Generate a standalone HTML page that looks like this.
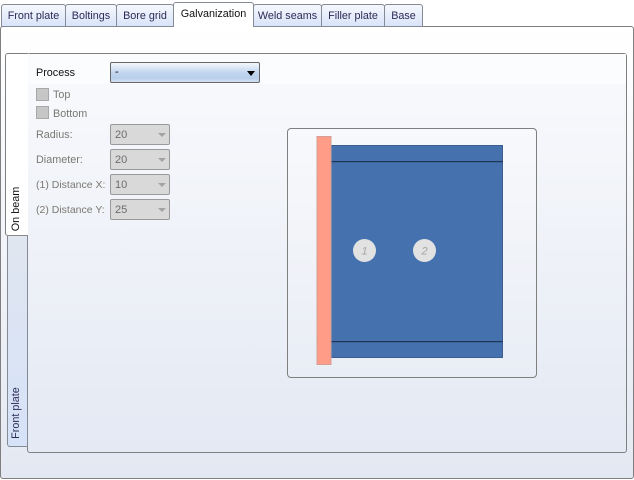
<!DOCTYPE html>
<html><head><meta charset="utf-8">
<style>
html,body{margin:0;padding:0;background:#fff}
body{width:634px;height:480px;position:relative;overflow:hidden;font-family:"Liberation Sans",sans-serif;font-size:10.8px}
div{position:absolute;box-sizing:border-box;white-space:nowrap}
.tab{top:4px;height:23px;border:1px solid #848b96;border-bottom:1px solid #848b96;border-radius:3px 3px 0 0;background:linear-gradient(#f5f8fd,#d9e4f9);color:#2b2b55;text-align:center;line-height:22px}
.lbl{color:#7a7872;left:36px}
.cmb{left:110px;width:60px;height:21px;border:1px solid #9a9a9a;border-radius:2px;background:#d9d9d9;color:#6d6d6d;padding-left:4px;line-height:20px;font-size:11px}
.cmb:after{content:"";position:absolute;right:3px;top:8px;border-left:4.5px solid transparent;border-right:4.5px solid transparent;border-top:4.5px solid #a3a3a3}
.chk{left:36px;width:13px;height:13px;border:1px solid #a8a8a8;background:#c6c6c6}
</style></head><body>
<div style="left:0;top:26px;width:634px;height:453px;border:1px solid #7f7f7f;border-radius:3px;background:linear-gradient(#fff,#e3e8f2)"></div>
<div class="tab" style="left:1px;width:65px">Front plate</div>
<div class="tab" style="left:65px;width:52px">Boltings</div>
<div class="tab" style="left:116px;width:58px">Bore grid</div>
<div class="tab" style="left:253px;width:69px">Weld seams</div>
<div class="tab" style="left:321px;width:64px">Filler plate</div>
<div class="tab" style="left:384px;width:39px">Base</div>
<div style="left:173px;top:2px;width:81px;height:25px;border:1px solid #848b96;border-bottom:none;border-radius:3px 3px 0 0;background:#fff;color:#111;text-align:center;line-height:22px;z-index:3">Galvanization</div>

<div style="left:27px;top:53px;width:600px;height:400px;border:1px solid #7f7f7f;border-radius:3px;background:linear-gradient(#f9fafd,#e4e9f3)"></div>
<div style="left:7px;top:236px;width:21px;height:211px;border:1px solid #848b96;border-top:none;border-radius:0 0 0 3px;background:linear-gradient(#e0e6f0,#d6e2f8);z-index:1"></div>
<div style="left:5px;top:53px;width:23px;height:183px;border:1px solid #7f7f7f;border-right:none;border-bottom:1px solid #8a8a8a;border-radius:3px 0 0 3px;background:#fff;z-index:2"></div>
<div style="left:16px;top:209px;height:14px;line-height:14px;transform:translate(-50%,-50%) rotate(-90deg);color:#111;z-index:3">On beam</div>
<div style="left:16px;top:413px;height:14px;line-height:14px;transform:translate(-50%,-50%) rotate(-90deg);color:#2b2b55;z-index:3">Front plate</div>
<div style="left:28px;top:54px;width:598px;height:30px;background:#fbfcfe"></div>

<div style="left:36px;top:66px;color:#111;line-height:14px">Process</div>
<div style="left:110px;top:62px;width:150px;height:21px;border:1px solid #666;border-radius:2px;background:linear-gradient(#f4f7fc,#c3d6ef 50%,#b8cfea 80%,#d5e1f2);color:#111;padding-left:4px;line-height:19px">-
<div style="right:4px;top:8px;border-left:4.5px solid transparent;border-right:4.5px solid transparent;border-top:5px solid #000"></div></div>

<div class="chk" style="top:87.5px"></div>
<div style="left:53px;top:88px;color:#7a7872;line-height:14px">Top</div>
<div class="chk" style="top:106px"></div>
<div style="left:53px;top:107px;color:#7a7872;line-height:14px">Bottom</div>

<div class="lbl" style="top:128px;line-height:14px">Radius:</div>
<div class="cmb" style="top:124px">20</div>
<div class="lbl" style="top:153px;line-height:14px">Diameter:</div>
<div class="cmb" style="top:149px">20</div>
<div class="lbl" style="top:178px;line-height:14px;font-size:10.5px">(1) Distance X:</div>
<div class="cmb" style="top:174px">10</div>
<div class="lbl" style="top:203px;line-height:14px;font-size:10.5px">(2) Distance Y:</div>
<div class="cmb" style="top:199px">25</div>

<div style="left:287px;top:128px;width:250px;height:250px;border:1px solid #7f7f7f;border-radius:4px;background:linear-gradient(#f8f9fc,#e9edf5)"></div>
<svg width="634" height="480" style="position:absolute;left:0;top:0">
<rect x="331" y="145.5" width="171.5" height="212" fill="#4572ae" stroke="#3d5f8f"/>
<rect x="331" y="161" width="172" height="1.2" fill="#1f3553"/>
<rect x="331" y="341" width="172" height="1.2" fill="#1f3553"/>
<rect x="317" y="136.5" width="14" height="228" fill="#fe9c88" stroke="#d2a095"/>
<circle cx="364.5" cy="250.5" r="11.5" fill="#e2e2e2"/>
<circle cx="424.5" cy="250.5" r="11.5" fill="#e2e2e2"/>
<text x="364.5" y="254.5" font-family="Liberation Sans" font-size="11" font-style="italic" fill="#a5a5a5" text-anchor="middle">1</text>
<text x="424.5" y="254.5" font-family="Liberation Sans" font-size="11" font-style="italic" fill="#a5a5a5" text-anchor="middle">2</text>
</svg>
</body></html>
